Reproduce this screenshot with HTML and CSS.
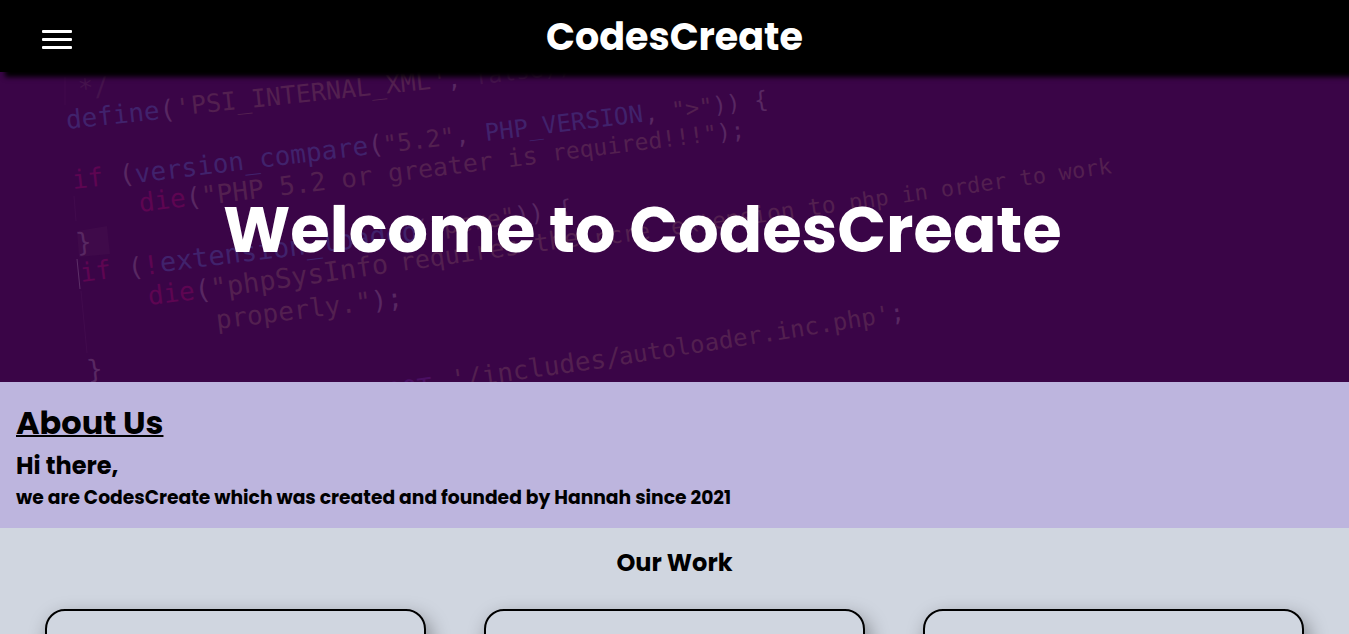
FILE: index.html
```html
<!DOCTYPE html>
<html lang="en">
<head>
<meta charset="utf-8">
<meta name="viewport" content="width=device-width, initial-scale=1">
<title>CodesCreate</title>
<link rel="stylesheet" href="styles.css">
</head>
<body>
<header class="header">
  <button class="menu" type="button" aria-label="Open menu">
    <span class="menu-bar"></span>
    <span class="menu-bar"></span>
    <span class="menu-bar"></span>
  </button>
  <p class="brand">CodesCreate</p>
</header>
<main>
  <section class="hero">
    <svg class="code" viewBox="-1 71 1349 310" preserveAspectRatio="xMidYMid slice" aria-hidden="true" xml:space="preserve">
      <g class="guide">
        <path d="M64 76v28M73 195l2 25M80 290l6 62"/>
        <path class="patch" d="M76 230l30-5 3 28-31 3z"/>
        <path class="caret" d="M76 258l3 30"/>
      </g>
      <g font-size="27">
        <text transform="translate(160 271) rotate(-7)"><tspan class="fn">extension_loaded</tspan></text>
        <text transform="translate(195 299) rotate(-8)"><tspan class="op">(</tspan><tspan class="str">"phpSysInfo </tspan></text>
      </g>
      <g font-size="26">
        <text class="dim" transform="translate(78 97) rotate(-6)">*/</text>
        <text transform="translate(66 128) rotate(-6)"><tspan class="fn">define</tspan><tspan class="op">(</tspan><tspan class="str">'</tspan></text>
        <text class="key" transform="translate(72 188) rotate(-6)">if</text>
        <text class="op" transform="translate(119 183) rotate(-7)">(</text>
        <text transform="translate(135 182) rotate(-7)"><tspan class="fn">version_compare</tspan><tspan class="op">(</tspan></text>
        <text class="key" transform="translate(139 211) rotate(-7)">die</text>
        <text transform="translate(186 206) rotate(-7)"><tspan class="op">(</tspan><tspan class="str">"PHP 5.2 or </tspan></text>
        <text class="op" transform="translate(76 251) rotate(-7)">}</text>
        <text class="key" transform="translate(80 281) rotate(-7)">if</text>
        <text transform="translate(128 276) rotate(-7)"><tspan class="op">(</tspan><tspan class="key">!</tspan></text>
        <text class="key" transform="translate(148 304) rotate(-7)">die</text>
        <text transform="translate(216 328) rotate(-7)"><tspan class="str">properly."</tspan><tspan class="op">);</tspan></text>
        <text class="op" transform="translate(87 378) rotate(-7)">}</text>
        <text class="str" transform="translate(451 388) rotate(-8)">'/includes/</text>
      </g>
      <g font-size="25">
        <text class="str" transform="translate(191 113) rotate(-6)">PSI_INTERNAL_XML</text>
        <text class="str" transform="translate(388 181) rotate(-7)">greater is</text>
        <text class="str" transform="translate(400 270) rotate(-8)">requires the</text>
        <text class="root" transform="translate(373 402) rotate(-8)">ROOT</text>
      </g>
      <g font-size="24">
        <text transform="translate(383 152) rotate(-7)"><tspan class="str">"5.2"</tspan><tspan class="op">,</tspan></text>
        <text class="fn" transform="translate(485 140) rotate(-7)">PHP_VERSION</text>
        <text transform="translate(415 237) rotate(-8)"><tspan class="op">(</tspan><tspan class="str">"pcre"</tspan><tspan class="op">)) {</tspan></text>
        <text transform="translate(619 364) rotate(-9)"><tspan class="str">autoloader.inc.php'</tspan><tspan class="op">;</tspan></text>
      </g>
      <g font-size="23">
        <text transform="translate(433 89) rotate(-7)"><tspan class="str">'</tspan><tspan class="op">, </tspan><tspan class="dim">false);</tspan></text>
        <text transform="translate(644 121) rotate(-7)"><tspan class="op">, </tspan><tspan class="str">"&gt;"</tspan><tspan class="op">)) {</tspan></text>
        <text transform="translate(552 160) rotate(-7)"><tspan class="str">required!!!"</tspan><tspan class="op">);</tspan></text>
        <text class="str" transform="translate(595 245) rotate(-8)">pcre</text>
        <text class="str" transform="translate(671 234) rotate(-8)">extension to</text>
      </g>
      <text class="str" font-size="22" transform="translate(849 209) rotate(-8)">php in order to work</text>
    </svg>
    <h1 class="hero-title">Welcome to CodesCreate</h1>
  </section>
  <section class="about">
    <h1 class="about-title">About Us</h1>
    <h2 class="about-greeting">Hi there,</h2>
    <h3 class="about-text">we are CodesCreate which was created and founded by Hannah since 2021</h3>
  </section>
  <section class="work">
    <h2 class="work-title">Our Work</h2>
    <div class="cards">
      <article class="card"></article>
      <article class="card"></article>
      <article class="card"></article>
    </div>
  </section>
</main>
</body>
</html>
```
FILE: styles.css
```css
* {
  box-sizing: border-box;
  margin: 0;
}

body {
  background: #d0d6e0;
  color: #000;
  font-family: Poppins, Inter, "Open Sans", sans-serif;
  font-weight: 700;
}

.header {
  position: relative;
  z-index: 1;
  display: grid;
  grid-template-columns: 1fr auto 1fr;
  align-items: center;
  min-height: 72px;
  padding: 0 42px;
  background: #000;
  box-shadow: 5px 5px 5px #000;
  color: #fff;
}

.menu {
  display: flex;
  flex-direction: column;
  gap: 5px;
  width: 30px;
  padding: 6px 0 0;
  border: 0;
  background: none;
  cursor: pointer;
}

.menu-bar {
  height: 3px;
  border-radius: 1px;
  background: #fff;
}

.brand {
  padding-top: 2px;
  font-size: 38px;
  line-height: 60px;
}

.hero {
  position: relative;
  display: flex;
  align-items: center;
  min-height: 310px;
  padding: 6px 16px 0 223px;
  overflow: hidden;
  background: #3a0547;
  color: #fff;
}

.code {
  position: absolute;
  inset: 0;
  width: 100%;
  height: 100%;
  font-family: "DejaVu Sans Mono", monospace;
  font-weight: 400;
  white-space: pre;
}

.fn { fill: #41226c; }
.key { fill: #5e0552; }
.str { fill: #532050; }
.op { fill: #582862; }
.dim { fill: #45134d; }
.root { fill: #4a0f62; }

.guide { fill: none; stroke: #410b4d; }
.patch { fill: #3f0a4a; stroke: none; }
.caret { stroke: #5d2f68; }

.hero-title {
  position: relative;
  font-size: 64px;
  line-height: 96px;
}

.about {
  padding: 17px 16px 16px;
  background: #bdb5de;
}

.about-title {
  font-size: 32px;
  line-height: 48px;
  text-decoration: underline 2px;
}

.about-greeting {
  padding-top: 1px;
  font-size: 24px;
  line-height: 36px;
}

.about-text {
  line-height: 28px;
}

.work {
  padding: 17px 45px 45px;
}

.work-title {
  font-size: 24px;
  line-height: 36px;
  text-align: center;
}

.cards {
  display: grid;
  grid-template-columns: repeat(3, 1fr);
  gap: 58px;
  padding-top: 28px;
}

.card {
  min-height: 300px;
  border: 2px solid #000;
  border-radius: 20px;
  box-shadow: 4px 8px 20px rgba(0, 0, 0, 0.4);
}
```
